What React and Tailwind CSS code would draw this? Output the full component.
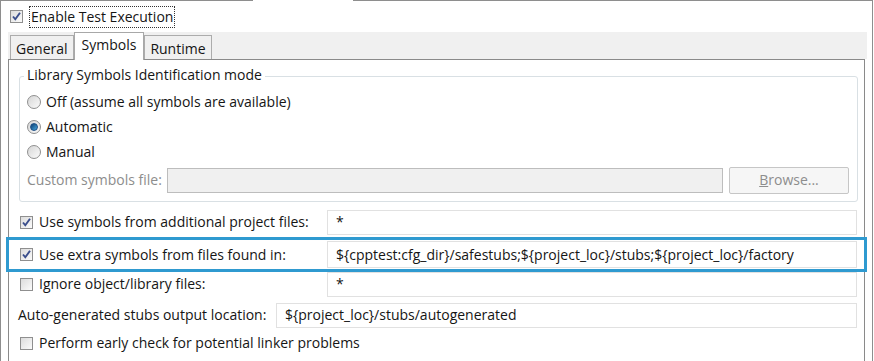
import React from 'react';

function CheckBox({ checked }) {
    return (
        <span className="w-[13px] h-[13px] shrink-0 border border-[#8f8f8f] bg-gradient-to-br from-[#dcdcdc] to-[#fbfbfb] flex items-center justify-center">
            {checked && (
                <svg width="11" height="11" viewBox="0 0 11 11" aria-hidden="true">
                    <path d="M2 5.5 L4.3 8.3 L9 1.8" fill="none" stroke="#3a4e8c" strokeWidth="1.9" />
                </svg>
            )}
        </span>
    );
}

function Radio({ checked }) {
    return (
        <span className="w-[14px] h-[14px] shrink-0 rounded-full border border-[#8f8f8f] bg-gradient-to-br from-[#d6d6d6] to-[#fbfbfb] flex items-center justify-center">
            {checked && (
                <span className="w-[8px] h-[8px] rounded-full bg-gradient-to-br from-[#0c3f73] to-[#4aa8de] border border-[#1d4f86]" />
            )}
        </span>
    );
}

function TextBox({ value, className = '' }) {
    return (
        <div className={`h-[25px] border border-[#e1e1e1] bg-white flex items-center px-[8px] ${className}`}>
            {value}
        </div>
    );
}

function Tab({ label, active }) {
    if (active) {
        return (
            <div className="h-[28px] -mb-[1px] px-[7px] bg-white border border-b-0 border-[#a8a8a8] flex items-start pt-[5px] relative z-10">
                {label}
            </div>
        );
    }
    return (
        <div className="h-[24px] mt-[3px] px-[5px] bg-[#f0f0f0] border border-b-0 border-[#acacac] flex items-center pt-[2px]">
            {label}
        </div>
    );
}

export default function App() {
    return (
        <div className="w-[874px] h-[361px] bg-white overflow-hidden text-[14px] text-[#151515] font-['Open_Sans',sans-serif] leading-none">
            <div className="flex h-[1px]">
                <div className="w-[253px] bg-[#8e8e8e]" />
                <div className="w-[100px]" />
                <div className="w-[520px] bg-[#8e8e8e]" />
            </div>
            <div className="w-[873px] h-[360px] border-l border-r border-[#8e8e8e]">
                <div className="h-[31px] flex items-center pl-[9px] gap-[6px]">
                    <CheckBox checked />
                    <span className="border border-dotted border-[#333] px-[1px] py-[3px]">Enable Test Execution</span>
                </div>
                <div className="ml-[7px] w-[859px] h-[27px] bg-[#f0f0f0] flex pl-[2px] items-start">
                    <Tab label="General" />
                    <Tab label="Symbols" active />
                    <Tab label="Runtime" />
                </div>
                <div className="ml-[7px] w-[857px] h-[302px] border-l border-r border-t border-[#8a8a8a] flex flex-col">
                    <div className="mt-[16px] ml-[10px] w-[839px] h-[126px] border border-[#d9e0e4] rounded-[3px] relative">
                        <span className="absolute -top-[9px] left-[4px] bg-white px-[3px]">Library Symbols Identification mode</span>
                        <div className="mt-[12px] pl-[7px] flex flex-col">
                            <div className="h-[25px] flex items-center gap-[5px]">
                                <Radio />
                                <span>Off (assume all symbols are available)</span>
                            </div>
                            <div className="h-[25px] flex items-center gap-[5px]">
                                <Radio checked />
                                <span>Automatic</span>
                            </div>
                            <div className="h-[25px] flex items-center gap-[5px]">
                                <Radio />
                                <span>Manual</span>
                            </div>
                            <div className="h-[32px] flex items-center">
                                <span className="text-[#8d8d8d] w-[140px]">Custom symbols file:</span>
                                <div className="w-[556px] h-[25px] border border-[#bdbdbd] bg-[#f0f0f0]" />
                                <div className="ml-[6px] w-[120px] h-[27px] border border-[#c6c6c6] rounded-[2px] bg-[#f6f6f6] flex items-center justify-center text-[#8d8d8d]">
                                    <span><span className="underline">B</span>rowse...</span>
                                </div>
                            </div>
                        </div>
                    </div>
                    <div className="mt-[7px] h-[26px] flex items-center pl-[11px]">
                        <CheckBox checked />
                        <span className="ml-[6px] w-[288px]">Use symbols from additional project files:</span>
                        <TextBox value="*" className="w-[530px]" />
                    </div>
                    <div className="mt-[2px] h-[35px] flex items-center pl-[11px] relative">
                        <div className="absolute -left-[3px] -right-[3px] top-0 bottom-0 border-[3px] border-[#2f9ad0]" />
                        <CheckBox checked />
                        <span className="ml-[6px] w-[288px]">Use extra symbols from files found in:</span>
                        <TextBox value="${cpptest:cfg_dir}/safestubs;${project_loc}/stubs;${project_loc}/factory" className="w-[530px] h-[27px]" />
                    </div>
                    <div className="h-[24px] flex items-center pl-[11px]">
                        <CheckBox />
                        <span className="ml-[6px] w-[288px]">Ignore object/library files:</span>
                        <TextBox value="*" className="w-[530px]" />
                    </div>
                    <div className="mt-[6px] h-[26px] flex items-center pl-[9px]">
                        <span className="w-[258px]">Auto-generated stubs output location:</span>
                        <TextBox value="${project_loc}/stubs/autogenerated" className="w-[581px] border-[#c9c9c9]" />
                    </div>
                    <div className="mt-[1px] h-[28px] flex items-center pl-[11px]">
                        <CheckBox />
                        <span className="ml-[6px]">Perform early check for potential linker problems</span>
                    </div>
                </div>
            </div>
        </div>
    );
}
